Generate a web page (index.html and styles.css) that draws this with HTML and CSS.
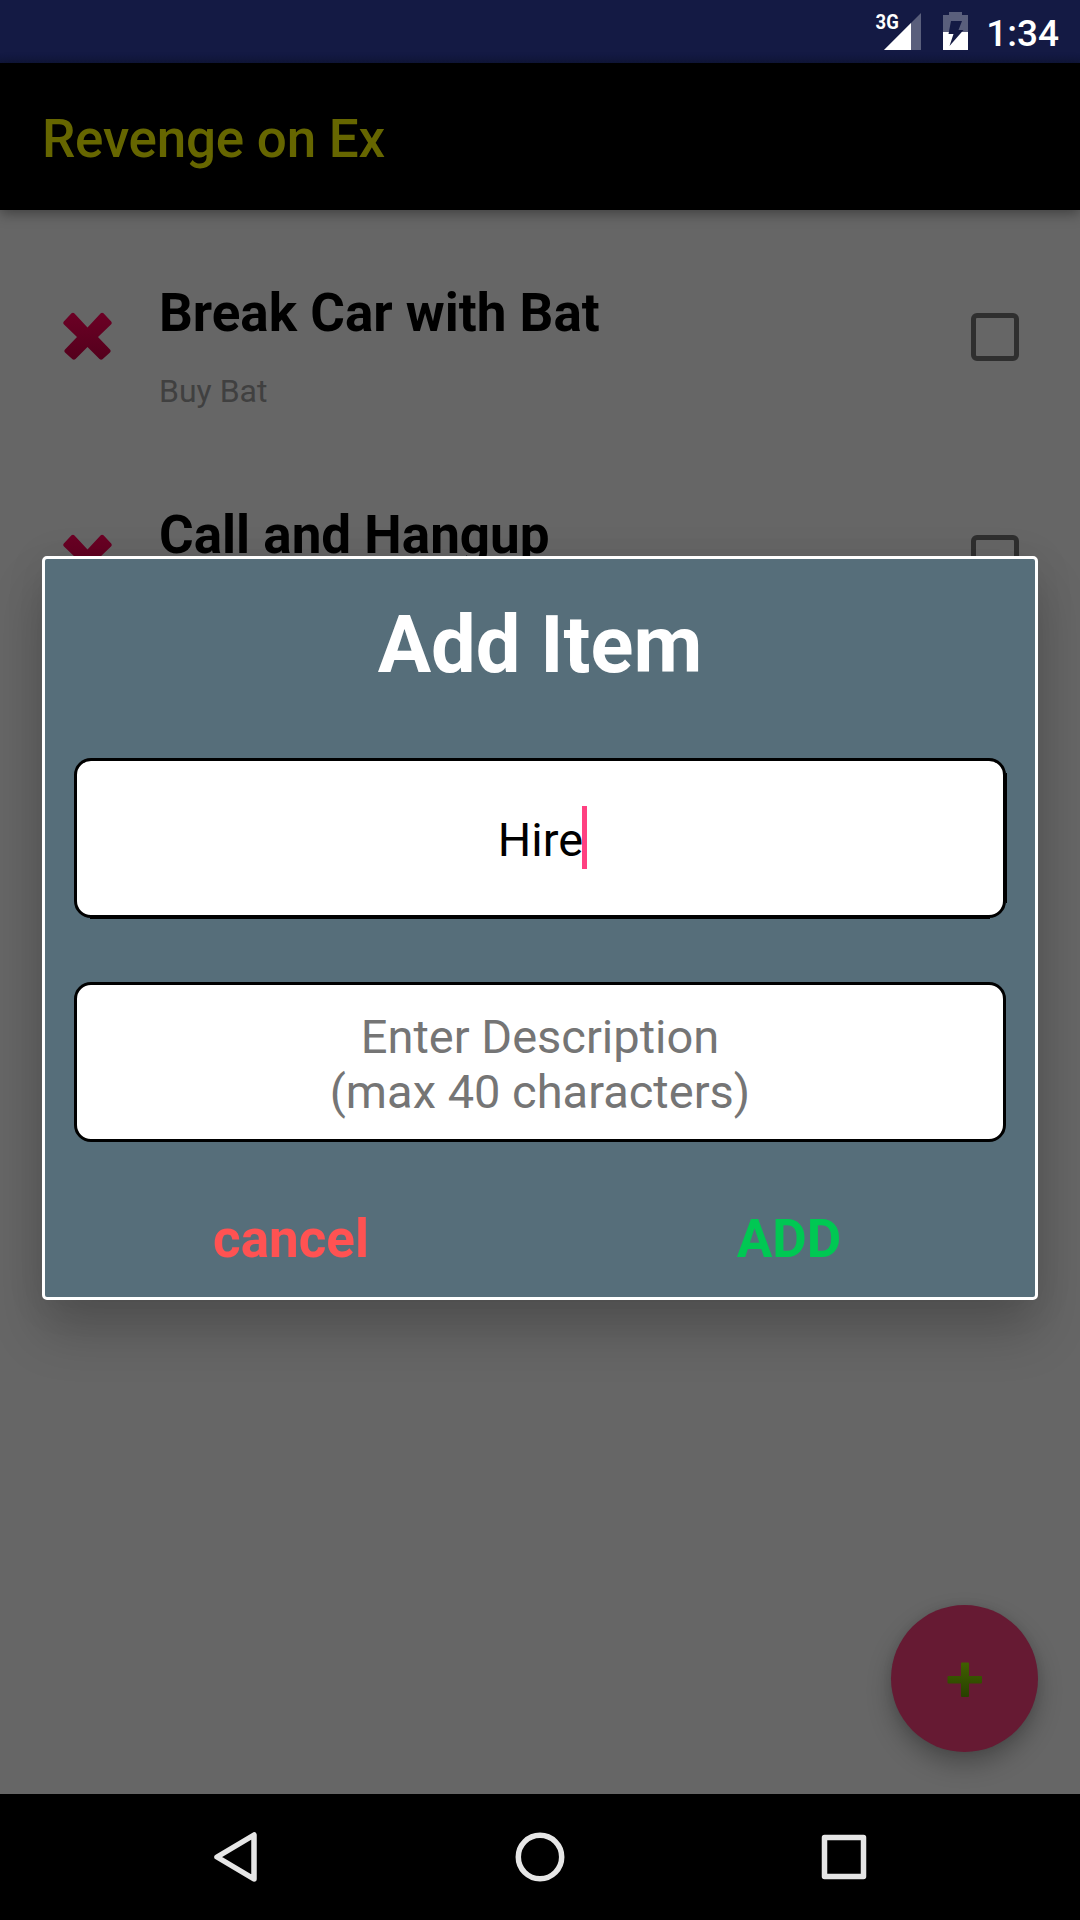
FILE: index.html
```html
<!DOCTYPE html>
<html lang="en">
<head>
<meta charset="utf-8">
<title>Revenge on Ex</title>
<link rel="stylesheet" href="styles.css">
</head>
<body>
<div class="screen">
  <header class="status-bar">
    <span class="network">3G</span>
    <svg class="signal" width="37" height="37" viewBox="0 0 37 37">
      <path d="M0 37L37 0V37Z" fill="#fff" fill-opacity=".3"/>
      <path d="M0 37L27 10V37Z" fill="#fff"/>
    </svg>
    <svg class="battery" width="25" height="38" viewBox="0 0 25 38">
      <path d="M6 0H19V3H25V20H0V3H6Z" fill="#fff" fill-opacity=".3"/>
      <path d="M0 20H25V38H0Z" fill="#fff"/>
      <path d="M8 9H19L15.5 18H20.5L6.5 34L10.5 22H5.5Z" fill="#141a44"/>
    </svg>
    <span class="clock">1:34</span>
  </header>
  <div class="app-bar"><h1 class="app-title">Revenge on Ex</h1></div>

  <main class="content">
    <svg class="defs" width="0" height="0">
      <defs>
        <linearGradient id="red" x1="0" y1="0" x2="0" y2="1">
          <stop offset="0" stop-color="#6c0025"/><stop offset="1" stop-color="#54001c"/>
        </linearGradient>
        <linearGradient id="green" x1="0" y1="0" x2="0" y2="1">
          <stop offset="0" stop-color="#406000"/><stop offset="1" stop-color="#284000"/>
        </linearGradient>
        <path id="cross" d="M8.5 1.3Q10 .2 11.500 1.500L24.500 15.500L37.500 1.500Q39 .2 40.500 1.300L48.200 9.500Q49.400 11 48 12.500L35 25L47 37.500Q48.300 39 47 40.500L39.500 47.300Q38 48.400 36.500 47L24.500 35L12.500 47Q11 48.400 9.500 47.300L2 40.500Q.7 39 2 37.500L14 25L1 12.500Q-.4 11 .8 9.500Z"/>
      </defs>
    </svg>
    <section class="row">
      <svg class="remove" width="49" height="49" viewBox="0 0 49 49"><use href="#cross" fill="url(#red)"/></svg>
      <div class="item">
        <h2 class="item-title">Break Car with Bat</h2>
        <p class="item-note">Buy Bat</p>
      </div>
      <span class="checkbox"></span>
    </section>
    <section class="row">
      <svg class="remove" width="49" height="49" viewBox="0 0 49 49"><use href="#cross" fill="url(#red)"/></svg>
      <div class="item">
        <h2 class="item-title">Call and Hangup</h2>
      </div>
      <span class="checkbox"></span>
    </section>
    <div class="fab">
      <svg width="36" height="36" viewBox="0 0 36 36">
        <path d="M15 .5H21Q22 .5 22 1.500V14H34Q35 14 35 15V20.500Q35 21.500 34 21.500H22V34Q22 35 21 35H15Q14 35 14 34V21.500H1.500Q.5 21.500 .5 20.500V15Q.5 14 1.500 14H14V1.500Q14 .5 15 .5Z" fill="url(#green)"/>
      </svg>
    </div>
  </main>

  <nav class="nav-bar">
    <svg class="nav-icon" width="50" height="50" viewBox="0 0 50 50"><path d="M42 3V47L5 25Z"/></svg>
    <svg class="nav-icon" width="50" height="50" viewBox="0 0 50 50"><circle cx="25" cy="25" r="21.700"/></svg>
    <svg class="nav-icon" width="50" height="50" viewBox="0 0 50 50"><rect x="6.500" y="5.500" width="39" height="39"/></svg>
  </nav>

  <div class="dialog">
    <h2 class="dialog-title">Add Item</h2>
    <div class="field focused"><span class="value">Hire</span><span class="caret"></span></div>
    <div class="field hint">Enter Description<br>(max 40 characters)</div>
    <div class="actions">
      <span class="action cancel">cancel</span>
      <span class="action add">ADD</span>
    </div>
  </div>
</div>
</body>
</html>
```

FILE: styles.css
```css
* { box-sizing: border-box; }
body { margin: 0; font-family: Roboto, sans-serif; }
h1, h2, p { margin: 0; }
svg { display: block; flex: none; }

.screen {
  position: relative;
  display: flex;
  flex-direction: column;
  width: 1080px;
  height: 1920px;
  overflow: hidden;
  background: #666;
}

.status-bar {
  display: flex;
  align-items: flex-start;
  justify-content: flex-end;
  height: 63px;
  padding-right: 21px;
  background: linear-gradient(#141a44 54px, #10163a);
  color: #fff;
}
.network {
  margin: 10px -16px 0 0;
  font-size: 21px;
  line-height: 24px;
  font-weight: 700;
  transform: scaleX(.88);
}
.signal { margin: 13px 22px 0 0; }
.battery { margin: 12px 18px 0 0; }
.clock { margin-top: 12px; font-size: 37px; line-height: 44px; font-weight: 500; }

.app-bar {
  position: relative;
  display: flex;
  align-items: center;
  height: 147px;
  padding: 4px 42px 0;
  background: #000;
  box-shadow: 0 4px 12px rgba(0, 0, 0, .35);
}
.app-title { color: #660; font-size: 53px; line-height: 62px; font-weight: 500; letter-spacing: -.25px; }

.content { position: relative; flex: 1; padding-top: 16px; }
.defs { position: absolute; }
.row { display: flex; align-items: flex-start; height: 222px; padding: 0 61px 0 63px; }
.remove { margin-top: 86px; }
.item { flex: 1; padding: 55px 0 0 47px; }
.item-title { font-size: 53px; line-height: 64px; font-weight: 700; color: #000; }
.item-note { margin-top: 27px; font-size: 32px; line-height: 38px; color: #404040; }
.checkbox {
  width: 48px;
  height: 48px;
  margin-top: 87px;
  border: 5.5px solid #2f2f2f;
  border-radius: 6px;
}
.fab {
  position: absolute;
  right: 42px;
  bottom: 42px;
  display: flex;
  align-items: center;
  justify-content: center;
  width: 147px;
  height: 147px;
  padding-top: 2px;
  border-radius: 50%;
  background: #661a33;
  box-shadow: 0 12px 24px rgba(0, 0, 0, .28), 0 0 10px rgba(0, 0, 0, .08);
}

.nav-bar {
  display: flex;
  align-items: center;
  justify-content: space-between;
  height: 126px;
  padding: 0 212px;
  background: #000;
}
.nav-icon { fill: none; stroke: #e6e6e6; stroke-width: 5.5; stroke-linejoin: round; }

.dialog {
  position: absolute;
  left: 42px;
  top: 556px;
  display: flex;
  flex-direction: column;
  width: 996px;
  height: 744px;
  padding: 0 29px;
  border: 3px solid #fff;
  border-radius: 5px;
  background: #566e7a;
  box-shadow: 0 32px 52px rgba(0, 0, 0, .2), 0 4px 40px rgba(0, 0, 0, .08);
}
.dialog-title {
  margin: 38px 0 65px;
  color: #fff;
  font-size: 79.5px;
  line-height: 96px;
  font-weight: 700;
  text-align: center;
}
.field {
  position: relative;
  display: flex;
  align-items: center;
  justify-content: center;
  height: 160px;
  margin-bottom: 64px;
  border: 3px solid #000;
  border-radius: 17px;
  background: #fff;
  font-size: 47px;
  line-height: 55px;
  text-align: center;
}
.focused::before, .focused::after { content: ""; position: absolute; background: #000; }
.focused::before { top: 12px; bottom: 12px; right: -4px; width: 1px; }
.focused::after { left: 13px; right: 13px; bottom: -4px; height: 1px; }
.value { padding-top: 2px; }
.caret { width: 5px; height: 63px; margin: 0 -5px 2px -1px; background: #ff4081; }
.hint { margin-bottom: 0; padding-top: 3px; color: #757575; }
.actions { display: flex; margin: 0 -32px; padding-top: 65px; }
.action { flex: 1; font-size: 53px; line-height: 64px; font-weight: 700; text-align: center; }
.cancel { color: #ff5252; }
.add { color: #00c853; }
```
